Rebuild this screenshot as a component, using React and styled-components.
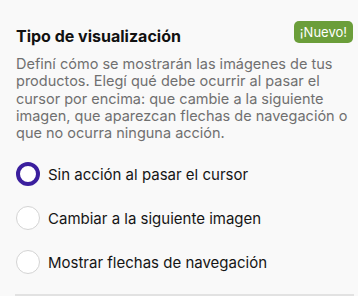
import React, { useState } from 'react';
import styled, { createGlobalStyle } from 'styled-components';

const GlobalStyle = createGlobalStyle`
  html, body {
    margin: 0;
    padding: 0;
    background: #f9f9f9;
  }
  body {
    font-family: Inter, "Noto Sans", sans-serif;
    -webkit-font-smoothing: antialiased;
  }
`;

const Panel = styled.section`
  width: 358px;
  height: 296px;
  box-sizing: border-box;
  padding: 21px 4px 0 16px;
  overflow: hidden;
  display: flex;
  flex-direction: column;
`;

const Header = styled.div`
  display: flex;
  justify-content: space-between;
  align-items: flex-start;
`;

const Title = styled.h2`
  margin: 7px 0 0 0;
  font-size: 16px;
  font-weight: 700;
  line-height: 16px;
  color: #111;
`;

const Badge = styled.span`
  background: #6b9e3a;
  color: #fff;
  font-size: 13px;
  line-height: 22px;
  height: 22px;
  padding: 0 6px;
  margin-right: 1px;
  border-radius: 5px;
`;

const Description = styled.p`
  margin: 11px 0 0 0;
  font-size: 14.5px;
  line-height: 17.3px;
  color: #707070;
`;

const Options = styled.div`
  display: flex;
  flex-direction: column;
  gap: 20px;
  margin-top: 21px;
`;

const Option = styled.label`
  display: flex;
  align-items: center;
  gap: 8px;
  cursor: pointer;
  font-size: 15px;
  color: #151515;
`;

const Dot = styled.span`
  width: 24px;
  height: 24px;
  box-sizing: border-box;
  border-radius: 50%;
  background: #fff;
  flex-shrink: 0;
  border: ${(p) => (p.$checked ? '4px solid #3b1f9e' : '1px solid #d4d4d4')};
`;

const Divider = styled.div`
  margin-top: auto;
  height: 2px;
  margin-left: -1px;
  background: #e2e2e2;
`;

const options = [
  'Sin acción al pasar el cursor',
  'Cambiar a la siguiente imagen',
  'Mostrar flechas de navegación',
];

export default function App() {
  const [selected, setSelected] = useState(0);

  return (
    <>
      <GlobalStyle />
      <Panel>
        <Header>
          <Title>Tipo de visualización</Title>
          <Badge>¡Nuevo!</Badge>
        </Header>
        <Description>
          Definí cómo se mostrarán las imágenes de tus productos. Elegí qué debe
          ocurrir al pasar el cursor por encima: que cambie a la siguiente
          imagen, que aparezcan flechas de navegación o que no ocurra ninguna
          acción.
        </Description>
        <Options>
          {options.map((text, i) => (
            <Option key={i} onClick={() => setSelected(i)}>
              <Dot $checked={selected === i} />
              {text}
            </Option>
          ))}
        </Options>
        <Divider />
      </Panel>
    </>
  );
}
